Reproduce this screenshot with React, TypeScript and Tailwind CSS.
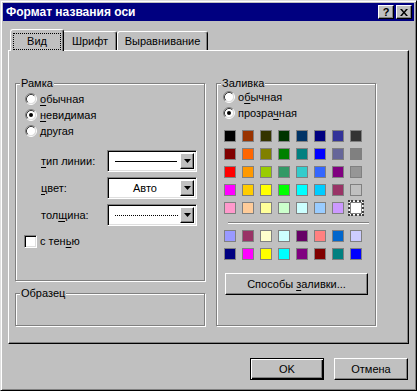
import React from "react";

const paletteTop = [
  ["#000000", "#993300", "#333300", "#003300", "#003366", "#000080", "#333399", "#333333"],
  ["#800000", "#ff6600", "#808000", "#008000", "#008080", "#0000ff", "#666699", "#808080"],
  ["#ff0000", "#ff9900", "#99cc00", "#339966", "#33cccc", "#3366ff", "#800080", "#969696"],
  ["#ff00ff", "#ffcc00", "#ffff00", "#00ff00", "#00ffff", "#00ccff", "#993366", "#c0c0c0"],
  ["#ff99cc", "#ffcc99", "#ffff99", "#ccffcc", "#ccffff", "#99ccff", "#cc99ff", "#ffffff"],
];

const paletteBottom = [
  ["#9999ff", "#993366", "#ffffcc", "#ccffff", "#660066", "#ff8080", "#0066cc", "#ccccff"],
  ["#000080", "#ff00ff", "#ffff00", "#00ffff", "#800080", "#800000", "#008080", "#0000ff"],
];

const raised =
  "bg-[#c0c0c0] border border-t-white border-l-white border-r-black border-b-black shadow-[inset_-1px_-1px_0_#808080]";
const sunken =
  "border border-t-[#808080] border-l-[#808080] border-r-white border-b-white shadow-[inset_1px_1px_0_#000,inset_-1px_-1px_0_#dfdfdf]";
const etched =
  "border border-[#808080] shadow-[inset_1px_1px_0_#fff,1px_1px_0_#fff]";

// подчёркнутая буква (горячая клавиша)
function U({ children }: { children: React.ReactNode }) {
  return <span className="underline underline-offset-[2px]">{children}</span>;
}

function Radio({ checked, children }: { checked?: boolean; children: React.ReactNode }) {
  return (
    <div className="flex items-center h-[16px] gap-[3px]">
      <svg width="12" height="12" viewBox="0 0 12 12">
        <circle cx="6" cy="6" r="4.5" fill="#fff" />
        <path d="M2.11 9.89A5.5 5.5 0 0 1 9.89 2.11" fill="none" stroke="#808080" />
        <path d="M9.89 2.11A5.5 5.5 0 0 1 2.11 9.89" fill="none" stroke="#fff" />
        <path d="M2.82 9.18A4.5 4.5 0 0 1 9.18 2.82" fill="none" stroke="#404040" />
        <path d="M9.18 2.82A4.5 4.5 0 0 1 2.82 9.18" fill="none" stroke="#dfdfdf" />
        {checked && <circle cx="6" cy="6" r="2" fill="#000" />}
      </svg>
      <span>{children}</span>
    </div>
  );
}

function Combo({ children, center }: { children: React.ReactNode; center?: boolean }) {
  return (
    <div className={`w-[90px] h-[22px] bg-white p-[2px] flex ${sunken}`}>
      <div className={`flex-1 flex items-center ${center ? "justify-center" : "pl-[5px]"}`}>
        {children}
      </div>
      <div className={`w-[14px] h-full flex items-center justify-center ${raised}`}>
        <svg width="7" height="4" viewBox="0 0 7 4">
          <path d="M0 0h7L3.5 4z" fill="#000" />
        </svg>
      </div>
    </div>
  );
}

function GroupBox({
  label,
  className,
  children,
}: {
  label: string;
  className: string;
  children?: React.ReactNode;
}) {
  return (
    <div className={`relative ${etched} ${className}`}>
      <span className="absolute left-[4px] top-[-8px] px-[1px] bg-[#c0c0c0] leading-[14px]">
        {label}
      </span>
      {children}
    </div>
  );
}

function Swatches({ rows, selected }: { rows: string[][]; selected?: number }) {
  return (
    <div className="grid grid-cols-8 gap-[6px] w-fit">
      {rows.flat().map((c, i) => (
        <div
          key={i}
          className={`w-[12px] h-[12px] border border-[#808080] ${
            selected === i ? "outline-2 outline-dotted outline-[#404040] shadow-[0_0_0_1px_#fff]" : ""
          }`}
          style={{ backgroundColor: c }}
        />
      ))}
    </div>
  );
}

export default function App() {
  return (
    <div className="w-[417px] h-[391px] bg-[#c0c0c0] border border-t-[#dfdfdf] border-l-[#dfdfdf] border-r-black border-b-black shadow-[inset_1px_1px_0_#fff,inset_-1px_-1px_0_#808080] p-[2px] flex flex-col font-['Liberation_Sans',Arial,sans-serif] text-[11px] leading-none text-black select-none">
      {/* Заголовок */}
      <div className="h-[18px] bg-[#000080] flex items-center justify-between pl-[3px] pr-[2px]">
        <span className="text-white font-bold text-[12px]">Формат названия оси</span>
        <div className="flex gap-[2px]">
          <div className={`w-[16px] h-[14px] flex items-center justify-center font-bold text-[11px] ${raised}`}>
            ?
          </div>
          <div className={`w-[16px] h-[14px] flex items-center justify-center ${raised}`}>
            <svg width="8" height="7" viewBox="0 0 8 7">
              <path d="M0 0h2l2 2.5L6 0h2L5 3.5 8 7H6L4 4.5 2 7H0l3-3.5z" fill="#000" />
            </svg>
          </div>
        </div>
      </div>

      <div className="flex flex-col px-[5px] pt-[8px]">
        {/* Вкладки */}
        <div className="flex items-end h-[21px] pl-[2px]">
          <div className="relative z-10 w-[54px] h-[22px] -mb-px bg-[#c0c0c0] border-l border-t border-r border-l-white border-t-white border-r-black rounded-t-[3px] shadow-[inset_-1px_0_0_#808080]">
            <div className="ml-[2px] mt-[3px] w-[48px] h-[17px] border border-dotted border-black flex items-center justify-center">
              Вид
            </div>
          </div>
          <div className="w-[53px] h-[19px] bg-[#c0c0c0] border-t border-r border-t-white border-r-black rounded-tr-[3px] shadow-[inset_-1px_0_0_#808080] flex items-center justify-center">
            Шрифт
          </div>
          <div className="w-[91px] h-[19px] bg-[#c0c0c0] border-l border-t border-r border-l-white border-t-white border-r-black rounded-t-[3px] shadow-[inset_-1px_0_0_#808080] flex items-center justify-center">
            Выравнивание
          </div>
        </div>

        {/* Панель */}
        <div className={`h-[294px] flex items-start gap-[11px] pl-[6px] pt-[32px] ${raised}`}>
          <div className="flex flex-col w-[190px]">
            <GroupBox label="Рамка" className="h-[198px] pt-[7px] pl-[9px]">
              <Radio>
                <U>о</U>бычная
              </Radio>
              <Radio checked>
                <U>н</U>евидимая
              </Radio>
              <Radio>
                <U>д</U>ругая
              </Radio>

              <div className="flex flex-col gap-[5px] mt-[11px]">
                <div className="flex items-center h-[22px]">
                  <span className="ml-[16px] w-[66px]">
                    <U>т</U>ип линии:
                  </span>
                  <Combo>
                    <div className="w-[62px] h-px bg-black" />
                  </Combo>
                </div>
                <div className="flex items-center h-[22px]">
                  <span className="ml-[16px] w-[66px]">
                    <U>ц</U>вет:
                  </span>
                  <Combo center>Авто</Combo>
                </div>
                <div className="flex items-center h-[22px]">
                  <span className="ml-[16px] w-[66px]">
                    тол<U>щ</U>ина:
                  </span>
                  <Combo>
                    <div className="w-[63px] border-t border-dotted border-black" />
                  </Combo>
                </div>
              </div>

              <div className="flex items-center h-[16px] mt-[7px] -ml-px gap-[3px]">
                <div className={`w-[13px] h-[13px] bg-white ${sunken}`} />
                <span>
                  с тен<U>ь</U>ю
                </span>
              </div>
            </GroupBox>

            <GroupBox label="Образец" className="mt-[12px] h-[33px]" />
          </div>

          <GroupBox label="Заливка" className="w-[160px] h-[243px] pt-[5px] pl-[6px]">
            <Radio>
              о<U>б</U>ычная
            </Radio>
            <Radio checked>
              прозра<U>ч</U>ная
            </Radio>

            <div className="mt-[9px] ml-px">
              <Swatches rows={paletteTop} selected={39} />
            </div>
            <div className="mt-[8px] ml-[5px] w-[141px] h-[2px] border-t border-t-[#808080] border-b border-b-white" />
            <div className="mt-[6px] ml-px">
              <Swatches rows={paletteBottom} />
            </div>

            <div className={`mt-[13px] ml-[2px] w-[143px] h-[22px] flex items-center justify-center ${raised}`}>
              <span>
                Способы <U>з</U>аливки...
              </span>
            </div>
          </GroupBox>
        </div>

        {/* Кнопки */}
        <div className="flex justify-end gap-[10px] pr-px mt-[14px]">
          <div className="w-[74px] h-[22px] bg-[#c0c0c0] border border-black shadow-[inset_1px_1px_0_#fff,inset_-1px_-1px_0_#000,inset_-2px_-2px_0_#808080] flex items-center justify-center">
            OK
          </div>
          <div className={`w-[74px] h-[22px] flex items-center justify-center ${raised}`}>
            Отмена
          </div>
        </div>
      </div>
    </div>
  );
}
